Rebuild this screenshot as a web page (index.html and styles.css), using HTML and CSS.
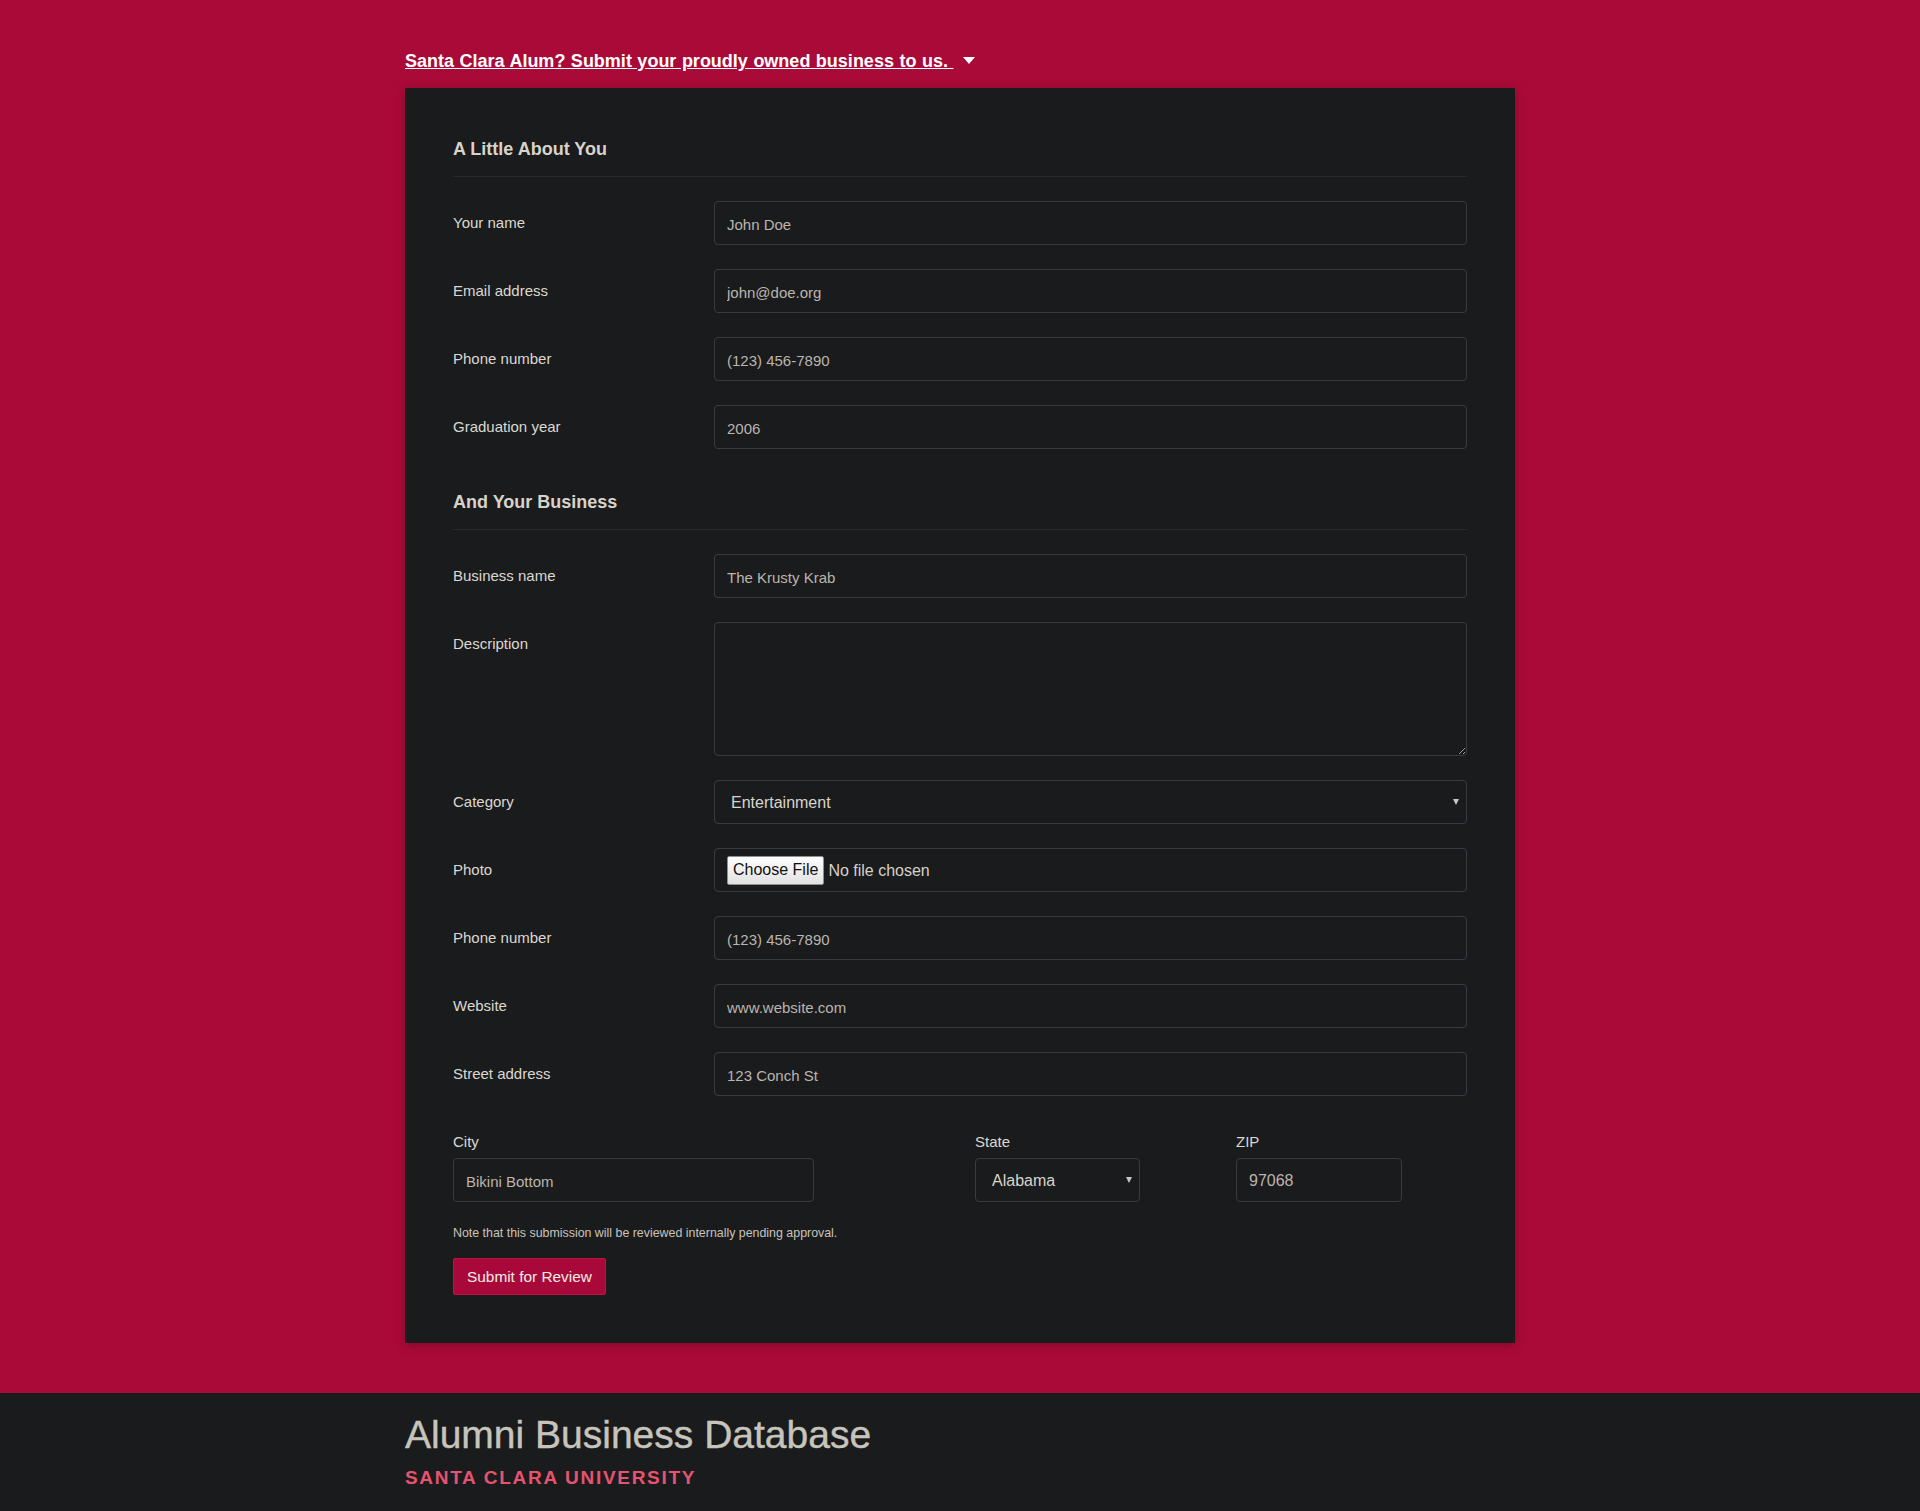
FILE: index.html
```html
<!DOCTYPE html>
<html lang="en">
<head>
<meta charset="utf-8">
<title>Alumni Business Database</title>
<link rel="stylesheet" href="styles.css">
</head>
<body>
<main class="page">
  <div class="container">
    <div class="toggle">
      <a class="toggle-link" href="#">Santa Clara Alum? Submit your proudly owned business to us.&nbsp;</a>
      <span class="caret"></span>
    </div>
    <form class="panel">
      <section class="section">
        <h2 class="section-title">A Little About You</h2>
        <div class="row"><label class="row-label">Your name</label><div><input class="field" type="text" value="John Doe"></div></div>
        <div class="row"><label class="row-label">Email address</label><div><input class="field" type="text" value="john@doe.org"></div></div>
        <div class="row"><label class="row-label">Phone number</label><div><input class="field" type="text" value="(123) 456-7890"></div></div>
        <div class="row"><label class="row-label">Graduation year</label><div><input class="field" type="text" value="2006"></div></div>
      </section>
      <section class="section section-next">
        <h2 class="section-title">And Your Business</h2>
        <div class="row"><label class="row-label">Business name</label><div><input class="field" type="text" value="The Krusty Krab"></div></div>
        <div class="row"><label class="row-label">Description</label><div><textarea class="field field-area"></textarea></div></div>
        <div class="row"><label class="row-label">Category</label><div class="select"><select class="field field-select"><option>Entertainment</option></select></div></div>
        <div class="row"><label class="row-label">Photo</label><div class="field field-file"><input class="file-input" type="file"></div></div>
        <div class="row"><label class="row-label">Phone number</label><div><input class="field" type="text" value="(123) 456-7890"></div></div>
        <div class="row"><label class="row-label">Website</label><div><input class="field" type="text" value="www.website.com"></div></div>
        <div class="row"><label class="row-label">Street address</label><div><input class="field" type="text" value="123 Conch St"></div></div>
        <div class="address">
          <div class="addr-group">
            <label class="addr-label">City</label>
            <input class="field field-city" type="text" value="Bikini Bottom">
          </div>
          <div class="addr-group">
            <label class="addr-label">State</label>
            <div class="select select-state"><select class="field field-select"><option>Alabama</option></select></div>
          </div>
          <div class="addr-group">
            <label class="addr-label">ZIP</label>
            <input class="field field-zip" type="text" value="97068">
          </div>
        </div>
        <p class="note">Note that this submission will be reviewed internally pending approval.</p>
        <button class="submit" type="button">Submit for Review</button>
      </section>
    </form>
  </div>
</main>
<footer class="footer">
  <div class="container">
    <h1 class="footer-title">Alumni Business Database</h1>
    <div class="footer-sub">SANTA CLARA UNIVERSITY</div>
  </div>
</footer>
</body>
</html>
```

FILE: styles.css
```css
* { box-sizing: border-box; }

html, body {
  margin: 0;
  padding: 0;
}

body {
  min-height: 100vh;
  display: flex;
  flex-direction: column;
  background: #aa0a37;
  font-family: "Liberation Sans", Arial, sans-serif;
}

.page {
  padding: 48px 0 50px;
}

.container {
  width: 1110px;
  margin: 0 auto;
}

.toggle {
  display: flex;
  align-items: center;
  height: 27px;
  margin-bottom: 13px;
}

.toggle-link {
  color: #ffffff;
  font-size: 18px;
  font-weight: bold;
  line-height: 27px;
  word-spacing: 0.5px;
  text-decoration: underline;
}

.caret {
  width: 0;
  height: 0;
  border-left: 6.5px solid transparent;
  border-right: 6.5px solid transparent;
  border-top: 7px solid #ffffff;
  margin-left: 10px;
  margin-bottom: 3px;
}

.panel {
  background: #1a1b1d;
  padding: 48px;
  box-shadow: 0 2px 10px rgba(0, 0, 0, 0.25);
}

.section-next {
  padding-top: 16px;
}

.section-title {
  margin: 0 0 24px;
  padding-bottom: 14px;
  border-bottom: 1px solid #27292c;
  font-size: 18px;
  line-height: 26px;
  font-weight: bold;
  color: #d8d3ca;
}

.row {
  display: grid;
  grid-template-columns: 261px 1fr;
  margin-bottom: 24px;
}

.row-label {
  padding-top: 10px;
  font-size: 15px;
  line-height: 24px;
  color: #dcd8d0;
}

.field {
  display: block;
  width: 100%;
  height: 44px;
  margin: 0;
  padding: 2px 12px 0;
  border: 1px solid #373c42;
  border-radius: 4px;
  background: #1a1b1d;
  color: #bab5ad;
  font-family: "Liberation Sans", Arial, sans-serif;
  font-size: 15px;
  outline: none;
}

.field-area {
  height: 134px;
  padding: 8px 12px;
}

.select {
  position: relative;
}

.select::after {
  content: "";
  position: absolute;
  right: 8px;
  top: 19px;
  width: 0;
  height: 0;
  border-left: 3.5px solid transparent;
  border-right: 3.5px solid transparent;
  border-top: 6px solid #c6c6c6;
  pointer-events: none;
}

.field-select {
  appearance: none;
  -webkit-appearance: none;
  padding: 0 16px;
  font-size: 16px;
  color: #d8d4cc;
}

.field-file {
  display: flex;
  align-items: center;
  padding: 0 12px;
}

.file-input {
  font-family: "Liberation Sans", Arial, sans-serif;
  font-size: 16px;
  color: #d6d1c9;
}

.file-input::file-selector-button {
  height: 29px;
  margin-right: 4px;
  padding: 0 5px;
  border: 1px solid #8f8f8f;
  border-radius: 2px;
  background: linear-gradient(#fdfdfd, #e2e2e2);
  color: #111111;
  font-family: "Liberation Sans", Arial, sans-serif;
  font-size: 16px;
}

.address {
  display: grid;
  grid-template-columns: 522px 261px 1fr;
  padding-top: 10px;
}

.addr-label {
  display: block;
  margin-bottom: 4px;
  font-size: 15px;
  line-height: 24px;
  color: #dcd8d0;
}

.field-city {
  width: 361px;
}

.select-state {
  width: 165px;
}

.field-zip {
  width: 166px;
  font-size: 16px;
}

.note {
  margin: 22px 0 16px;
  font-size: 12.4px;
  line-height: 18px;
  color: #c9c4bc;
}

.submit {
  display: block;
  height: 37px;
  padding: 0 13px;
  border: 1px solid #c0123f;
  border-radius: 2px;
  background: #a8093a;
  color: #f3ede6;
  font-family: "Liberation Sans", Arial, sans-serif;
  font-size: 15.4px;
}

.footer {
  flex: 1 0 auto;
  background: #1a1b1d;
  padding: 18px 0 23px;
}

.footer-title {
  margin: 0;
  font-size: 39px;
  line-height: 47px;
  font-weight: normal;
  color: #c7c4bc;
  -webkit-text-stroke: 0.4px #c7c4bc;
}

.footer-sub {
  margin-top: 8px;
  font-size: 19px;
  line-height: 23px;
  font-weight: bold;
  letter-spacing: 1.7px;
  color: #e5536f;
}
```
